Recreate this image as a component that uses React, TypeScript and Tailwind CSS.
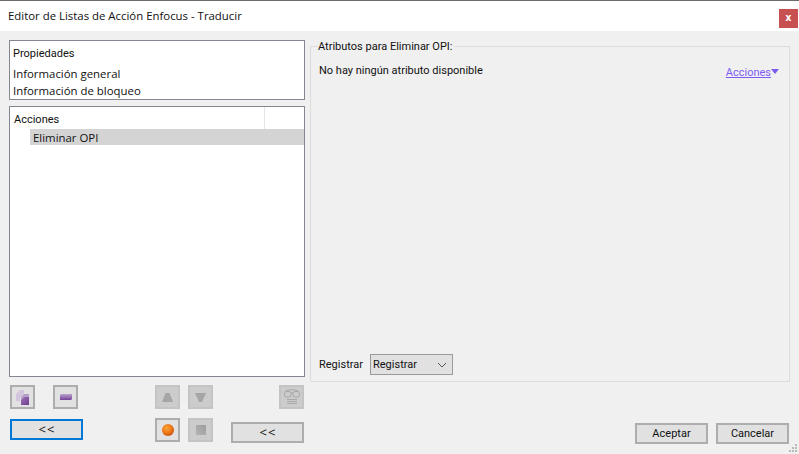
const font = { fontFamily: '"Open Sans", "Noto Sans", sans-serif' };

function IconButton({
  className = "",
  disabled,
  children,
}: {
  className?: string;
  disabled?: boolean;
  children: React.ReactNode;
}) {
  return (
    <button
      type="button"
      className={`flex h-6 w-[25px] items-center justify-center border-2 ${
        disabled ? "border-[#c4c4c4] bg-[#cccccc]" : "border-[#adadad] bg-[#e1e1e1]"
      } ${className}`}
    >
      {children}
    </button>
  );
}

function TextButton({ label, className = "" }: { label: string; className?: string }) {
  return (
    <button
      type="button"
      className={`flex h-[21px] w-[73px] items-center justify-center border-2 border-[#adadad] bg-[#e1e1e1] pt-[2px] font-[Roboto,sans-serif] text-[11px] text-[#111] ${className}`}
    >
      {label}
    </button>
  );
}

function BackButton({ focused, className = "" }: { focused?: boolean; className?: string }) {
  return (
    <button
      type="button"
      className={`flex h-[21px] w-[73px] items-center justify-center gap-[1px] border-2 bg-[#e1e1e1] ${
        focused ? "border-[#0078d7]" : "border-[#adadad]"
      } ${className}`}
      aria-label="<<"
    >
      <span className="text-[13px] leading-none text-[#111]">&lt;</span>
      <span className="text-[13px] leading-none text-[#111]">&lt;</span>
    </button>
  );
}

export default function App() {
  return (
    <div className="relative flex h-[454px] w-[799px] flex-col overflow-hidden bg-[#f0f0f0] text-[11.4px] text-[#111]" style={font}>
      {/* title bar */}
      <div className="flex h-[31px] items-center justify-between border-t border-[#6b6b6b] bg-white pl-2 pr-[1px]">
        <span>Editor de Listas de Acción Enfocus - Traducir</span>
        <div className="mt-[4px] flex h-[19px] w-[19px] items-center justify-center bg-[#c75050] pb-[2px] text-[10px] font-bold leading-none text-white">
          x
        </div>
      </div>

      <div className="flex flex-1 pl-[9px] pt-[9px]">
        {/* left column */}
        <div className="flex w-[296px] flex-col">
          <div className="flex h-[60px] flex-col border border-[#828790] bg-white pl-[3px] leading-[17px]">
            <div className="mt-[4px] mb-[1px] h-[20px] font-[Roboto,sans-serif] text-[11px]">Propiedades</div>
            <div>Información general</div>
            <div>Información de bloqueo</div>
          </div>

          <div className="mt-[6px] h-[271px] border border-[#828790] bg-white">
            <div className="flex h-[22px]">
              <div className="flex-1 border-r border-[#e5e5e5] pl-1 pt-[4px] font-[Roboto,sans-serif] text-[11px] leading-[17px]">
                Acciones
              </div>
              <div className="w-[39px]" />
            </div>
            <div className="ml-[20px] h-4 bg-[#d4d4d4] pl-[3px] leading-[17px]">Eliminar OPI</div>
          </div>

          <div className="mt-[8px] flex pl-[1px]">
            <IconButton>
              <svg width="13" height="15" viewBox="0 0 13 15">
                <defs>
                  <linearGradient id="cube" x1="0" y1="0" x2="1" y2="1">
                    <stop offset="0" stopColor="#9a73b3" />
                    <stop offset="1" stopColor="#6f3d92" />
                  </linearGradient>
                </defs>
                <path d="M4 0h4v4L4 8v3H0V4z" fill="#d3c5dd" />
                <path d="M8 4h5v3H8l-3 3V7z" fill="#b59dc7" />
                <path d="M5 10l3-3h5v8H5z" fill="url(#cube)" />
              </svg>
            </IconButton>
            <IconButton className="ml-[18px]">
              <svg width="12" height="6" viewBox="0 0 12 6">
                <defs>
                  <linearGradient id="bar" x1="0" y1="0" x2="0" y2="1">
                    <stop offset="0" stopColor="#bba3cc" />
                    <stop offset="1" stopColor="#75429a" />
                  </linearGradient>
                </defs>
                <path d="M1 0h11v5l-1 1H0V1z" fill="url(#bar)" />
              </svg>
            </IconButton>
            <IconButton disabled className="ml-[77px]">
              <svg width="11" height="9" viewBox="0 0 11 9">
                <path d="M3.500 0h4L11 9H0z" fill="#a6a6a6" />
              </svg>
            </IconButton>
            <IconButton disabled className="ml-2">
              <svg width="11" height="9" viewBox="0 0 11 9">
                <path d="M0 0h11L7 9H4z" fill="#a6a6a6" />
              </svg>
            </IconButton>
            <IconButton disabled className="ml-[66px]">
              <svg width="16" height="16" viewBox="0 0 16 16" fill="none" stroke="#a8a8a8" strokeWidth="1">
                <path d="M1 3c1-3 13-3 14 0" />
                <rect x=".5" y="2.500" width="6.500" height="5.500" rx="2" />
                <rect x="9" y="2.500" width="6.500" height="5.500" rx="2" />
                <path d="M7 4h2M3 10.500h10M3 12.500h10M3 14.500h10" />
              </svg>
            </IconButton>
          </div>

          <div className="mt-[9px] flex pl-[1px]">
            <BackButton focused className="mt-[1px]" />
            <IconButton className="ml-[72px]">
              <svg width="12" height="12" viewBox="0 0 12 12">
                <defs>
                  <radialGradient id="orb" cx="0.400" cy="0.350" r="0.700">
                    <stop offset="0" stopColor="#f9a63a" />
                    <stop offset="0.600" stopColor="#ec7514" />
                    <stop offset="1" stopColor="#c4500f" />
                  </radialGradient>
                </defs>
                <circle cx="6" cy="6" r="6" fill="url(#orb)" />
              </svg>
            </IconButton>
            <IconButton disabled className="ml-2">
              <svg width="10" height="10" viewBox="0 0 10 10">
                <defs>
                  <linearGradient id="stop" x1="0" y1="1" x2="1" y2="0">
                    <stop offset="0" stopColor="#b4b4b4" />
                    <stop offset="1" stopColor="#9c9c9c" />
                  </linearGradient>
                </defs>
                <rect width="10" height="10" fill="url(#stop)" />
              </svg>
            </IconButton>
            <BackButton className="mt-[4px] ml-[18px]" />
          </div>
        </div>

        {/* right column */}
        <div className="ml-[5px] flex w-[480px] flex-col font-[Roboto,sans-serif] text-[11px]">
          <fieldset className="-mt-[2px] h-[344px] border border-[#dcdcdc] pl-2 pr-2">
            <legend className="ml-[-1px] pr-[2px] pt-[1px] leading-[16px]">Atributos para Eliminar OPI:</legend>
            <div className="flex h-[320px] flex-col">
              <div className="flex items-start justify-between pt-[7px]">
                <span className="leading-[17px]">No hay ningún atributo disponible</span>
                <span className="mt-[2px] flex items-start pr-[2px] text-[#7c5cf0]">
                  <span className="leading-[17px] underline">Acciones</span>
                  <svg width="8" height="5" viewBox="0 0 8 5" className="mt-[5px]">
                    <path d="M0 0h8L4 5z" fill="#7c5cf0" />
                  </svg>
                </span>
              </div>
              <div className="mt-auto flex items-center">
                <span className="w-[51px] pt-[2px]">Registrar</span>
                <div className="flex h-[21px] w-[83px] items-center justify-between border border-[#9a9a9a] bg-[#e1e1e1] pl-[2px] pr-[5px]">
                  <span className="pt-[1px]">Registrar</span>
                  <svg width="10" height="6" viewBox="0 0 10 6" fill="none" stroke="#555" strokeWidth="1">
                    <path d="M1 1l4 4 4-4" />
                  </svg>
                </div>
              </div>
            </div>
          </fieldset>

          <div className="mt-auto mb-[10px] flex justify-end gap-2 pr-[1px]">
            <TextButton label="Aceptar" />
            <TextButton label="Cancelar" />
          </div>
        </div>
      </div>

      {/* resize grip */}
      <svg width="9" height="9" viewBox="0 0 9 9" className="absolute right-[1px] bottom-[1px]" fill="#b8b8b8">
        <rect x="6" y="0" width="2" height="2" />
        <rect x="3" y="3" width="2" height="2" />
        <rect x="6" y="3" width="2" height="2" />
        <rect x="0" y="6" width="2" height="2" />
        <rect x="3" y="6" width="2" height="2" />
        <rect x="6" y="6" width="2" height="2" />
      </svg>
    </div>
  );
}
